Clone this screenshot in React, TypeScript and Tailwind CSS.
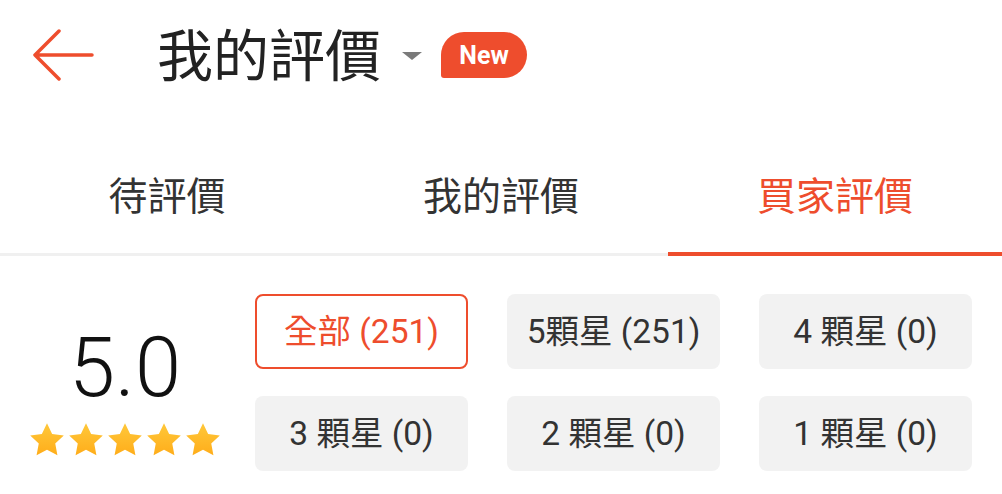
import { useState } from 'react';

const filters = [
  { label: '全部 (251)' },
  { label: '5顆星 (251)' },
  { label: '4 顆星 (0)' },
  { label: '3 顆星 (0)' },
  { label: '2 顆星 (0)' },
  { label: '1 顆星 (0)' },
];

const tabs = ['待評價', '我的評價', '買家評價'];

const Star = () => (
  <svg width="38" height="35" viewBox="0 0 24 22.5">
    <defs>
      <linearGradient id="starGrad" x1="0" y1="0" x2="0" y2="1">
        <stop offset="0%" stopColor="#ffc83a" />
        <stop offset="100%" stopColor="#ffad1a" />
      </linearGradient>
    </defs>
    <path
      d="M12 0.8l3.3 6.9 7.5 1-5.5 5.2 1.4 7.5L12 17.8l-6.7 3.6 1.4-7.5L1.2 8.7l7.5-1z"
      fill="url(#starGrad)"
    />
  </svg>
);

const App = () => {
  const [activeTab, setActiveTab] = useState(2);
  const [activeFilter, setActiveFilter] = useState(0);

  return (
    <div
      className="w-[1002px] h-[494px] bg-white overflow-hidden"
      style={{ fontFamily: 'Roboto, "Noto Sans CJK TC", sans-serif' }}
    >
      {/* header */}
      <div className="flex items-center h-[114px] pl-[32px]">
        <svg width="62" height="52" viewBox="0 0 62 52" className="shrink-0 -mt-[4px]">
          <path
            d="M60 26H4M27 2L3 26l24 24"
            fill="none"
            stroke="#ee4d2d"
            strokeWidth="3.5"
            strokeLinecap="round"
            strokeLinejoin="round"
          />
        </svg>
        <div className="ml-[63px] text-[56px] leading-none text-[#222]">我的評價</div>
        <svg width="22" height="10" viewBox="0 0 22 10" className="ml-[20px] -mt-[2px]">
          <path d="M1 1h20L11 9z" fill="#7a7a7a" />
        </svg>
        <div className="ml-[18px] -mt-[4px] h-[46px] w-[86px] flex items-center justify-center rounded-[23px] rounded-bl-[3px] bg-[#ee4d2d] text-white text-[25px] font-bold leading-none">
          New
        </div>
      </div>

      {/* tabs */}
      <div className="mt-[24px] flex border-b-[3px] border-[#f0f0f0]">
        {tabs.map((tab, index) => (
          <button
            key={tab}
            onClick={() => setActiveTab(index)}
            className={`flex-1 h-[118px] flex items-center justify-center pt-[4px] text-[39px] leading-none border-b-4 -mb-[3px] ${
              activeTab === index ? 'text-[#ee4d2d] border-[#ee4d2d]' : 'text-[#333] border-transparent'
            }`}
          >
            {tab}
          </button>
        ))}
      </div>

      {/* rating summary */}
      <div className="flex pt-[38px]">
        <div className="w-[250px] shrink-0 flex flex-col items-center pt-[32px]">
          <div className="text-[83px] font-light leading-none text-[#111]">5.0</div>
          <div className="mt-[13px] flex gap-[1px]">
            {[0, 1, 2, 3, 4].map((i) => (
              <Star key={i} />
            ))}
          </div>
        </div>
        <div className="ml-[5px] grid grid-cols-[213px_213px_213px] gap-x-[39px] gap-y-[27px]">
          {filters.map((f, index) => (
            <button
              key={f.label}
              onClick={() => setActiveFilter(index)}
              className={`h-[75px] rounded-[8px] flex items-center justify-center text-[33.5px] leading-none ${
                activeFilter === index
                  ? 'bg-white border-2 border-[#ee4d2d] text-[#ee4d2d]'
                  : 'bg-[#f2f2f2] text-[#333]'
              }`}
            >
              {f.label}
            </button>
          ))}
        </div>
      </div>
    </div>
  );
};

export default App;
